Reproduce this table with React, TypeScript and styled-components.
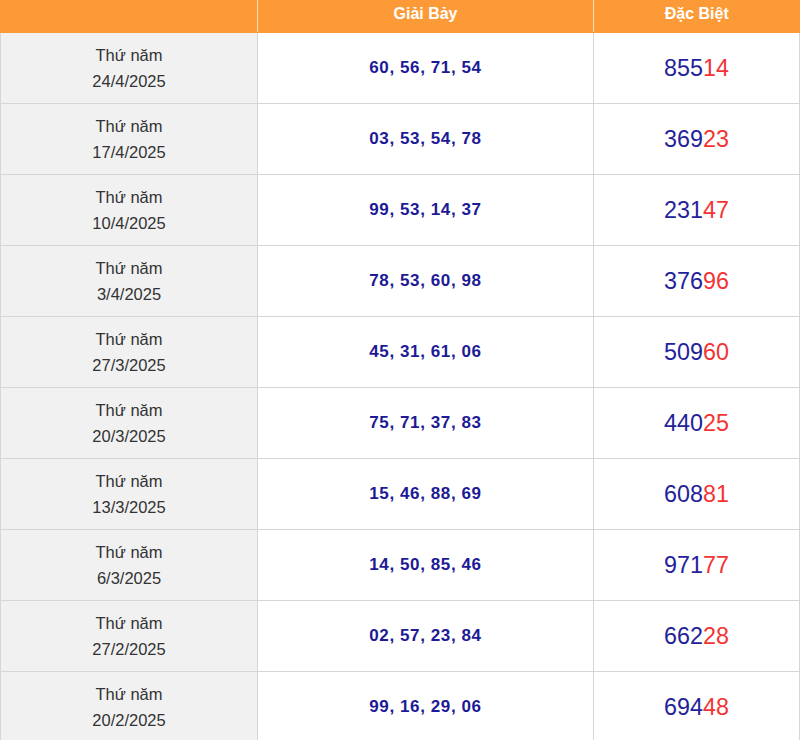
import React from "react";
import styled, { createGlobalStyle } from "styled-components";

const Global = createGlobalStyle`
  html, body { margin: 0; padding: 0; background: #fff; }
  body { font-family: "Liberation Sans", Arial, sans-serif; }
`;

const Table = styled.table`
  width: 800px;
  border-collapse: collapse;
  table-layout: fixed;
  font-family: "Liberation Sans", Arial, sans-serif;
`;

const HeadCell = styled.th`
  background: #fd9a38;
  color: #fff;
  font-weight: bold;
  font-size: 16px;
  line-height: 18px;
  height: 28px;
  padding: 0 0 4px;
  text-align: center;
  vertical-align: middle;
  border-left: 1px solid #fde0c0;
  border-bottom: 1px solid #fd9a38;
  &:first-child { border-left: 1px solid #fd9a38; }
`;

const Cell = styled.td<{ $shade?: boolean }>`
  height: 70px;
  padding: 0;
  text-align: center;
  vertical-align: middle;
  border: 1px solid #d6d6d6;
  background: ${(p) => (p.$shade ? "#f1f1f2" : "#fff")};
`;

const DateText = styled.div`
  font-size: 16.5px;
  line-height: 26px;
  color: #333;
`;

const Seven = styled.span`
  font-size: 17px;
  font-weight: bold;
  color: #1d1a96;
  letter-spacing: 0.6px;
`;

const Special = styled.span`
  font-size: 23.3px;
  color: #24229b;
`;

const Tail = styled.span`
  color: #f23434;
`;

const rows = [
  ["24/4/2025", "60, 56, 71, 54", "85514"],
  ["17/4/2025", "03, 53, 54, 78", "36923"],
  ["10/4/2025", "99, 53, 14, 37", "23147"],
  ["3/4/2025", "78, 53, 60, 98", "37696"],
  ["27/3/2025", "45, 31, 61, 06", "50960"],
  ["20/3/2025", "75, 71, 37, 83", "44025"],
  ["13/3/2025", "15, 46, 88, 69", "60881"],
  ["6/3/2025", "14, 50, 85, 46", "97177"],
  ["27/2/2025", "02, 57, 23, 84", "66228"],
  ["20/2/2025", "99, 16, 29, 06", "69448"],
];

export default function App() {
  return (
    <>
      <Global />
      <Table>
        <colgroup>
          <col style={{ width: 257 }} />
          <col style={{ width: 336 }} />
          <col />
        </colgroup>
        <thead>
          <tr>
            <HeadCell></HeadCell>
            <HeadCell>Giải Bảy</HeadCell>
            <HeadCell>Đặc Biệt</HeadCell>
          </tr>
        </thead>
        <tbody>
          {rows.map(([d, s, sp]) => (
            <tr key={d}>
              <Cell $shade>
                <DateText>Thứ năm</DateText>
                <DateText>{d}</DateText>
              </Cell>
              <Cell>
                <Seven>{s}</Seven>
              </Cell>
              <Cell>
                <Special>
                  {sp.slice(0, 3)}
                  <Tail>{sp.slice(3)}</Tail>
                </Special>
              </Cell>
            </tr>
          ))}
        </tbody>
      </Table>
    </>
  );
}
